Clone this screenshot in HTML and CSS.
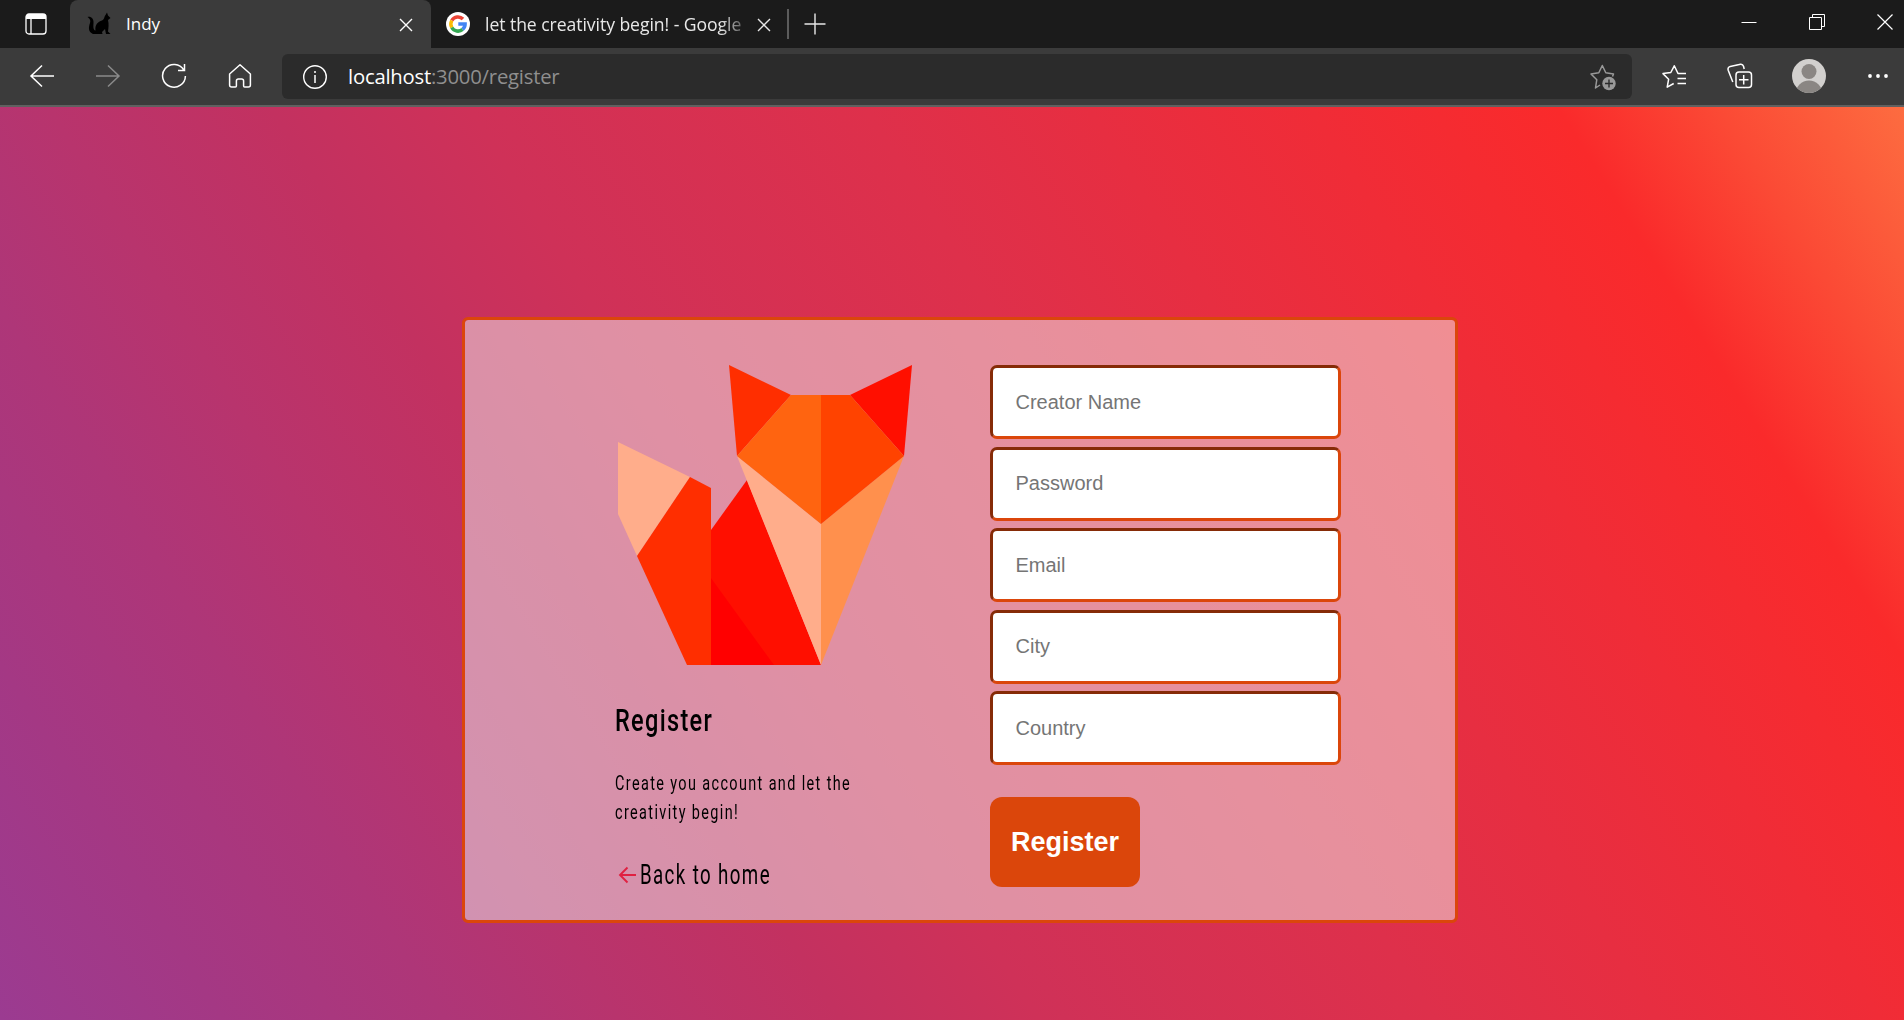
FILE: index.html
```html
<!DOCTYPE html>
<html lang="en">
<head>
<meta charset="utf-8">
<title>Indy</title>
<link rel="stylesheet" href="styles.css">
</head>
<body>
<header class="tabstrip">
  <div class="tab-actions">
    <svg width="22" height="22" viewBox="0 0 22 22"><rect x="1" y="1" width="20" height="20" rx="3" fill="none" stroke="#fff" stroke-width="1.3"/><path d="M1 6V4a3 3 0 0 1 3-3h14a3 3 0 0 1 3 3v2z" fill="#fff"/><path d="M6 6v15" stroke="#fff" stroke-width="1.3"/></svg>
  </div>
  <div class="tab tab-active">
    <svg class="favicon" width="24" height="24" viewBox="0 0 24 24"><path d="M.5 5C4 4 7 7 6.500 11 6.300 14 6 18 8.500 18.500 7.500 13 11 9.500 15 8.500 17.500 7.500 17 5 18.500 3L20 .5 21 3.500 23.500 6 21 8C22 12 21.500 16 21 19.500L23.500 22H19L18 17 15 20 15.500 22H6C1 20 1.500 15 3 11 4 8 2.500 6.500.5 5z" fill="#000"/></svg>
    <span class="tab-title">Indy</span>
    <svg class="tab-close" width="14" height="14" viewBox="0 0 14 14"><path d="M1 1l12 12M13 1L1 13" stroke="#fff" stroke-width="1.4"/></svg>
  </div>
  <div class="tab">
    <svg class="favicon" width="24" height="24" viewBox="0 0 24 24"><circle cx="12" cy="12" r="12" fill="#fff"/><g fill="none" stroke-width="3.500"><path d="M5.800 8.500A7.100 7.100 0 0 1 17 7" stroke="#ea4335"/><path d="M5.800 15.500a7.100 7.100 0 0 1 0-7" stroke="#fbbc05"/><path d="M5.800 15.500A7.100 7.100 0 0 0 16.600 17.400" stroke="#34a853"/><path d="M12.300 12h6.800a7.100 7.100 0 0 1-2.500 5.400" stroke="#4285f4"/></g></svg>
    <span class="tab-title tab-title-long">let the creativity begin! - Google</span>
    <svg class="tab-close" width="14" height="14" viewBox="0 0 14 14"><path d="M1 1l12 12M13 1L1 13" stroke="#e8e8e8" stroke-width="1.400"/></svg>
  </div>
  <div class="tab-divider"></div>
  <svg class="new-tab" width="22" height="22" viewBox="0 0 22 22"><path d="M11 .5v21M.5 11h21" stroke="#e8e8e8" stroke-width="1.400"/></svg>
  <div class="window-controls">
    <svg width="16" height="16" viewBox="0 0 16 16"><path d="M.5 8.500h15" stroke="#fff"/></svg>
    <svg width="16" height="16" viewBox="0 0 16 16"><path d="M.5 3.500h12v12H.5zM3.500 3.500v-3h12v12h-3" fill="none" stroke="#fff"/></svg>
    <svg width="16" height="16" viewBox="0 0 16 16"><path d="M.5.5l15 15M15.500.5l-15 15" stroke="#fff" stroke-width="1.200"/></svg>
  </div>
</header>
<nav class="toolbar">
  <div class="tool"><svg width="26" height="26" viewBox="0 0 26 26"><path d="M13 2.500L2 13l11 10.500M2 13h23" fill="none" stroke="#fff" stroke-width="1.500"/></svg></div>
  <div class="tool"><svg width="26" height="26" viewBox="0 0 26 26"><path d="M13 2.500L24 13 13 23.500M24 13H1" fill="none" stroke="#8a8a8a" stroke-width="1.500"/></svg></div>
  <div class="tool"><svg width="26" height="26" viewBox="0 0 26 26"><path d="M22.800 7A11.400 11.400 0 1 0 24.400 13M23.500 1v6.500H17" fill="none" stroke="#fff" stroke-width="1.500"/></svg></div>
  <div class="tool"><svg width="26" height="26" viewBox="0 0 26 26"><path d="M13 1.800L2.600 11v11q0 2 2 2h3.800q1 0 1-1v-5q0-2 2-2h3.200q2 0 2 2v5q0 1 1 1h3.800q2 0 2-2V11z" fill="none" stroke="#fff" stroke-width="1.500" stroke-linejoin="round"/></svg></div>
  <div class="address">
    <svg width="26" height="26" viewBox="0 0 26 26"><circle cx="13" cy="13" r="11.300" fill="none" stroke="#fff" stroke-width="1.400"/><path d="M13 11v8M13 7v2" stroke="#fff" stroke-width="1.500"/></svg>
    <span class="url"><b>localhost</b>:3000/register</span>
    <svg class="add-favorite" width="28" height="28" viewBox="0 0 28 28"><path d="M11 22l-4.500 3 1.300-8.300L2 11l7.800-1.200L13.300 2.500l3.500 7.300 7.700 1.200-1 2.500" fill="none" stroke="#999" stroke-width="1.500" stroke-linejoin="round"/><circle cx="20" cy="20.500" r="6.700" fill="#999"/><path d="M20 16.500v8M16 20.500h8" stroke="#2b2b2b" stroke-width="1.400"/></svg>
  </div>
  <div class="tool"><svg width="26" height="26" viewBox="0 0 26 26"><path d="M25 10.500h-8L13.300 2.800 9.800 9.500 2 10.600l5.600 5.700L6.200 24.200l6.500-3.700M16.500 15.500H25M16.500 20.500H25" fill="none" stroke="#fff" stroke-width="1.500" stroke-linejoin="round"/></svg></div>
  <div class="tool"><svg width="26" height="26" viewBox="0 0 26 26"><path d="M5.800 19L1.200 7.200q-.8-3 2-3.700L13.500 1.200q2.300-.3 3 2L17.200 6" fill="none" stroke="#fff" stroke-width="1.500"/><rect x="9" y="9" width="15.500" height="15.500" rx="3" fill="none" stroke="#fff" stroke-width="1.500"/><path d="M16.700 12v9.500M12 16.700h9.500" stroke="#fff" stroke-width="1.500"/></svg></div>
  <div class="tool tool-profile"><svg width="34" height="34" viewBox="0 0 34 34"><defs><clipPath id="disc"><circle cx="17" cy="17" r="17"/></clipPath></defs><circle cx="17" cy="17" r="17" fill="#d2d0ce"/><circle cx="17" cy="12.500" r="7.500" fill="#8a8683"/><circle cx="17" cy="35" r="13.500" fill="#8a8683" clip-path="url(#disc)"/></svg></div>
  <div class="tool tool-more"><svg width="26" height="26" viewBox="0 0 26 26" fill="#fff"><circle cx="5" cy="13" r="1.900"/><circle cx="13" cy="13" r="1.900"/><circle cx="21" cy="13" r="1.900"/></svg></div>
</nav>
<main class="page">
  <section class="card">
    <div class="intro">
      <svg class="fox" width="296" height="300" viewBox="0 0 296 300">
        <path d="M1 77L73 112 20 191 1 149z" fill="#ffad8b"/>
        <path d="M73 112L94 123V300H70L20 191z" fill="#ff2e00"/>
        <path d="M94 165L130 115 204 300H94z" fill="#ff0f00"/>
        <path d="M94 213L157 300H94z" fill="#f00"/>
        <path d="M120 91L204 159V300z" fill="#ffad8b"/>
        <path d="M287 91L204 159V300z" fill="#ff904d"/>
        <path d="M112 0L174 30 120 91z" fill="#ff2e00"/>
        <path d="M295 0L233 30 287 91z" fill="#ff0f00"/>
        <path d="M174 30H204V159L120 91z" fill="#ff6410"/>
        <path d="M204 30H233L287 91 204 159z" fill="#ff4300"/>
      </svg>
      <h1 class="title">Register</h1>
      <p class="lead">Create you account and let the<br>creativity begin!</p>
      <a class="back"><svg width="18" height="18" viewBox="0 0 18 18"><path d="M9.500 1.500L2 9l7.500 7.500M2 9h16" fill="none" stroke="#e02041" stroke-width="1.900"/></svg><span class="back-label">Back to home</span></a>
    </div>
    <form class="form">
      <input class="field" placeholder="Creator Name">
      <input class="field" placeholder="Password">
      <input class="field" placeholder="Email">
      <input class="field" placeholder="City">
      <input class="field" placeholder="Country">
      <button class="submit" type="button">Register</button>
    </form>
  </section>
</main>
</body>
</html>
```
FILE: styles.css
```css
* { box-sizing: border-box; }
body {
  margin: 0;
  height: 1020px;
  overflow: hidden;
  display: flex;
  flex-direction: column;
  font-family: "Open Sans", "Noto Sans", sans-serif;
}
svg { display: block; flex: none; }

.tabstrip { display: flex; align-items: center; height: 48px; background: #1b1b1b; color: #fff; }
.tab-actions { width: 70px; padding-left: 25px; }
.tab { display: flex; align-items: center; width: 357px; height: 48px; padding: 0 17px 0 15px; color: #e8e8e8; }
.tab-active { width: 361px; padding: 0 18px 0 17px; background: #3b3b3b; border-radius: 8px 8px 0 0; color: #fff; }
.tab-title { flex: 1; margin-left: 15px; padding-bottom: 1px; font-size: 17px; white-space: nowrap; overflow: hidden; }
.tab-title-long {
  flex: none;
  width: 258px;
  margin-right: 14px;
  font-size: 17.6px;
  letter-spacing: -0.06px;
  -webkit-mask-image: linear-gradient(90deg, #000 235px, rgba(0, 0, 0, .3) 258px);
  mask-image: linear-gradient(90deg, #000 235px, rgba(0, 0, 0, .3) 258px);
}
.tab-close { margin-top: 2px; }
.tab-divider { width: 2px; height: 30px; margin-left: -1px; background: #5c5c5c; }
.new-tab { margin: -1px 0 0 15px; }
.window-controls { display: flex; gap: 52px; margin-left: auto; padding: 0 11px 5px 0; }

.toolbar { display: flex; align-items: center; height: 59px; padding: 0 0 1px 9px; background: #3b3b3b; border-bottom: 2px solid #606060; }
.tool { display: flex; justify-content: center; width: 66px; flex: none; }
.tool-profile { width: 72px; }
.tool-more { width: 59px; padding-left: 7px; }
.address { display: flex; align-items: center; flex: 1; height: 45px; margin: 1px 9px 0; padding: 0 15px 0 20px; border-radius: 6px; background: #2b2b2b; }
.url { flex: 1; margin-left: 20px; padding-bottom: 1px; color: #8f8f8f; font-size: 20.3px; letter-spacing: -0.22px; }
.url b { color: #fff; font-weight: 400; }

.page {
  flex: 1;
  padding: 210px 0 0 462px;
  background: linear-gradient(58deg, #9b3b91 0%, #a43884 9%, #ae3678 18%, #b8346d 25%, #c33160 34%, #cf3158 42%, #de304b 58%, #f02c37 76%, #fa2a2b 86%, #fb4a35 92.5%, #fd6c40 100%);
}
.card {
  display: grid;
  grid-template-columns: 374px 351px;
  width: 996px;
  height: 606px;
  padding: 45px 0 0 151px;
  border: 3px solid #db460b;
  border-radius: 6px;
  background: rgba(240, 240, 240, .5);
  background-clip: padding-box;
}
.intro { display: flex; flex-direction: column; align-items: flex-start; color: #000; font-family: Roboto, sans-serif; }
.fox { margin-left: 1px; }
.title { margin: 37px 0 0 -1px; font-size: 31px; line-height: 38px; font-weight: 500; letter-spacing: 1.7px; transform: scaleX(.76); transform-origin: 0 50%; }
.lead { margin: 29px 0 0 -1px; font-size: 20px; line-height: 29px; letter-spacing: 1.9px; white-space: nowrap; transform: scaleX(.722); transform-origin: 0 50%; }
.back { display: flex; align-items: center; gap: 4px; margin: 30px 0 0 2px; height: 36px; }
.back-label { font-size: 27px; line-height: 36px; font-weight: 400; letter-spacing: 2px; white-space: nowrap; transform: scaleX(.693); transform-origin: 0 50%; }

.form { display: flex; flex-direction: column; align-items: flex-start; gap: 7.5px; }
.field {
  width: 351px;
  height: 74px;
  padding: 0 22px 0 22.5px;
  border: 3px solid #db460b;
  border-top-color: #862b07;
  border-left-color: #862b07;
  border-radius: 7px;
  background: #fff;
  font: 20px "Liberation Sans", sans-serif;
}
.field::placeholder { color: #757575; opacity: 1; }
.submit {
  width: 150px;
  height: 90px;
  margin-top: 24.5px;
  padding: 1px 0 0;
  border: 0;
  border-radius: 12px;
  background: #db460b;
  color: #fff;
  font: bold 27px "Liberation Sans", sans-serif;
}
```
